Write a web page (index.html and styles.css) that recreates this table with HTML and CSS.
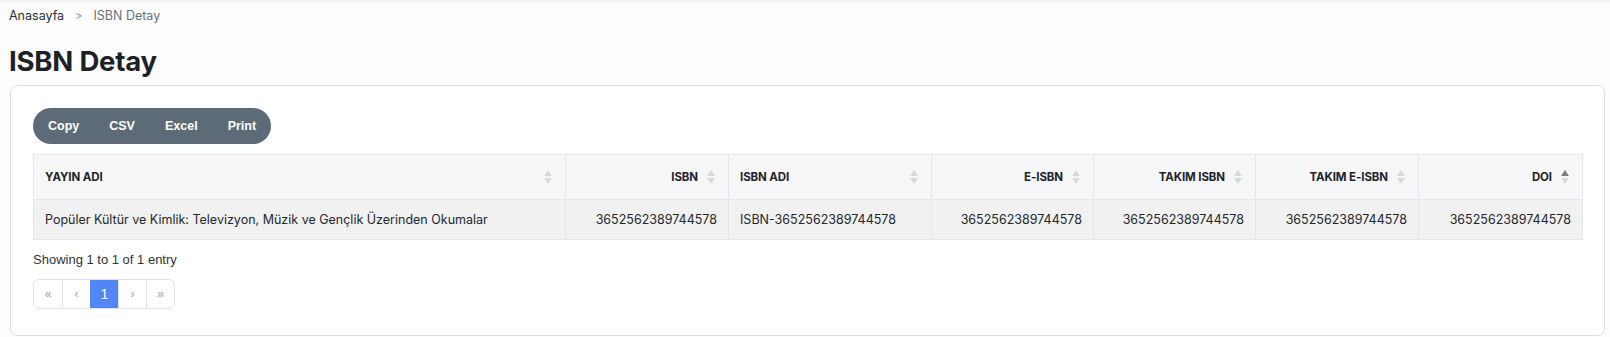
FILE: index.html
```html
<!DOCTYPE html>
<html lang="tr">
<head>
<meta charset="utf-8">
<title>ISBN Detay</title>
<link rel="stylesheet" href="styles.css">
</head>
<body>
<div class="topbar"></div>
<div class="page">
  <nav class="breadcrumb">
    <span class="crumb-home">Anasayfa</span>
    <span class="crumb-sep">&gt;</span>
    <span class="crumb-current">ISBN Detay</span>
  </nav>
  <h1 class="page-title">ISBN Detay</h1>
  <section class="card">
    <div class="btn-group">
      <button class="btn">Copy</button>
      <button class="btn">CSV</button>
      <button class="btn">Excel</button>
      <button class="btn">Print</button>
    </div>
    <table class="data-table">
      <colgroup>
        <col class="c1"><col class="c2"><col class="c3"><col class="c4"><col class="c5"><col class="c6"><col class="c7">
      </colgroup>
      <thead>
        <tr>
          <th class="left sortable">YAYIN ADI<span class="sort"></span></th>
          <th class="right sortable">ISBN<span class="sort"></span></th>
          <th class="left sortable">ISBN ADI<span class="sort"></span></th>
          <th class="right sortable">E-ISBN<span class="sort"></span></th>
          <th class="right sortable">TAKIM ISBN<span class="sort"></span></th>
          <th class="right sortable">TAKIM E-ISBN<span class="sort"></span></th>
          <th class="right sortable">DOI<span class="sort asc"></span></th>
        </tr>
      </thead>
      <tbody>
        <tr>
          <td class="left">Popüler Kültür ve Kimlik: Televizyon, Müzik ve Gençlik Üzerinden Okumalar</td>
          <td class="right">3652562389744578</td>
          <td class="left">ISBN-3652562389744578</td>
          <td class="right">3652562389744578</td>
          <td class="right">3652562389744578</td>
          <td class="right">3652562389744578</td>
          <td class="right">3652562389744578</td>
        </tr>
      </tbody>
    </table>
    <div class="info">Showing 1 to 1 of 1 entry</div>
    <ul class="pagination">
      <li class="pg">«</li>
      <li class="pg">‹</li>
      <li class="pg active">1</li>
      <li class="pg">›</li>
      <li class="pg">»</li>
    </ul>
  </section>
</div>
</body>
</html>
```

FILE: styles.css
```css
* { box-sizing: border-box; }
html, body { margin: 0; padding: 0; }
body {
  background: #fdfdfe;
  font-family: Inter, "Noto Sans", sans-serif;
  color: #212529;
  width: 1610px;
  height: 337px;
  overflow: hidden;
}
.topbar {
  height: 3px;
  background: #f3f4f6;
}
.page {
  padding: 0 5px 0 10px;
}
.breadcrumb {
  display: flex;
  align-items: center;
  height: 25px;
  font-size: 12.5px;
  padding-left: 0;
  margin-left: -1px;
  gap: 0;
}
.crumb-home { color: #2b2f36; }
.crumb-sep { color: #8a8f96; margin: 0 11px 0 11px; font-size: 11px; }
.crumb-current { color: #6b7078; }
.page-title {
  margin: 13px 0 0 -1px;
  font-size: 27.5px;
  font-weight: 700;
  line-height: 40px;
  height: 44px;
  color: #1d2127;
  letter-spacing: -0.2px;
}
.card {
  background: #fff;
  border: 1px solid #dcdde0;
  border-radius: 7px;
  padding: 22px 22px 25px 22px;
  height: 251px;
}
.btn-group {
  display: inline-flex;
  background: #5d6b78;
  border-radius: 18px;
  height: 36px;
  overflow: hidden;
}
.btn {
  background: transparent;
  border: 0;
  color: #fff;
  font-family: "Liberation Sans", Arial, sans-serif;
  font-weight: 700;
  font-size: 12.5px;
  padding: 0 15px;
  height: 36px;
  cursor: pointer;
}
.data-table {
  margin-top: 10px;
  width: 1549px;
  border-collapse: collapse;
  table-layout: fixed;
  font-size: 12.5px;
}
.c1 { width: 532px; }
.c2 { width: 163px; }
.c3 { width: 203px; }
.c4 { width: 162px; }
.c5 { width: 162px; }
.c6 { width: 163px; }
.c7 { width: 164px; }
.data-table th, .data-table td {
  border: 1px solid #e3e6ea;
  padding: 0 11px;
  white-space: nowrap;
}
.data-table th {
  background: #f6f7f9;
  height: 45px;
  font-weight: 700;
  font-size: 11.5px;
  color: #1f242b;
  position: relative;
  padding-right: 30px;
  letter-spacing: -0.1px;
}
.data-table td {
  background: #f1f1f1;
  height: 40px;
  color: #24282e;
  font-weight: 400;
}
.left { text-align: left; }
.right { text-align: right; }
.sort {
  position: absolute;
  right: 13px;
  top: 50%;
  width: 8px;
  height: 14px;
  margin-top: -7px;
}
.sort::before, .sort::after {
  content: "";
  position: absolute;
  left: 0;
  border-left: 4px solid transparent;
  border-right: 4px solid transparent;
}
.sort::before {
  top: 0;
  border-bottom: 6px solid #d6d8db;
}
.sort::after {
  bottom: 0;
  border-top: 6px solid #d6d8db;
}
.sort.asc::before { border-bottom-color: #7a7f85; }
.info {
  font-family: "Liberation Sans", Arial, sans-serif;
  font-size: 13px;
  color: #30343a;
  margin-top: 12px;
  line-height: 15px;
}
.pagination {
  list-style: none;
  margin: 12px 0 0 0;
  padding: 0;
  display: inline-flex;
  border: 1px solid #dee2e6;
  border-radius: 6px;
  overflow: hidden;
  height: 30px;
}
.pg {
  font-family: "Liberation Sans", Arial, sans-serif;
  font-size: 12px;
  color: #9aa0a6;
  width: 28px;
  display: flex;
  align-items: center;
  justify-content: center;
  border-left: 1px solid #dee2e6;
}
.pg:first-child { border-left: 0; }
.pg.active {
  background: #5286f7;
  color: #fff;
  font-size: 14px;
  border-left-color: #5286f7;
}
```
